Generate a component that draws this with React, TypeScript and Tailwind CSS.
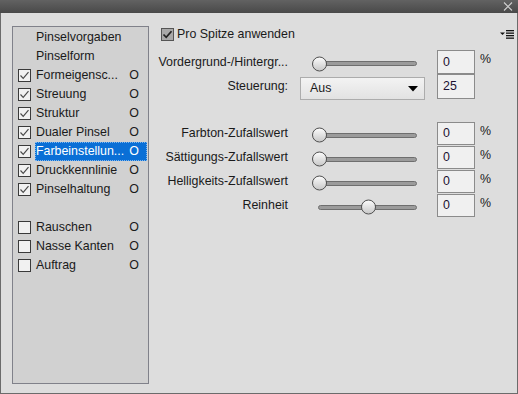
import React from "react";

const Check = ({ checked, dark }: { checked: boolean; dark?: boolean }) => (
  <div
    className={
      dark
        ? "w-[13px] h-[13px] border border-[#555555] bg-[#a9a9a9] flex items-center justify-center"
        : "w-[13px] h-[13px] border border-[#3a3a3a] bg-[#f1f1f1] flex items-center justify-center"
    }
  >
    {checked && (
      <svg width="11" height="11" viewBox="0 0 11 11">
        <polyline
          points="1.5,5.5 4.2,8.3 9.5,2.2"
          fill="none"
          stroke={dark ? "#222222" : "#4a4a4a"}
          strokeWidth={dark ? 1.7 : 1.2}
        />
      </svg>
    )}
  </div>
);

type Item = { label: string; cb: boolean | null; checked?: boolean; o?: boolean; sel?: boolean };

const items: (Item | null)[] = [
  { label: "Pinselvorgaben", cb: null },
  { label: "Pinselform", cb: null },
  { label: "Formeigensc...", cb: true, checked: true, o: true },
  { label: "Streuung", cb: true, checked: true, o: true },
  { label: "Struktur", cb: true, checked: true, o: true },
  { label: "Dualer Pinsel", cb: true, checked: true, o: true },
  { label: "Farbeinstellun...", cb: true, checked: true, o: true, sel: true },
  { label: "Druckkennlinie", cb: true, checked: true, o: true },
  { label: "Pinselhaltung", cb: true, checked: true, o: true },
  null,
  { label: "Rauschen", cb: true, checked: false, o: true },
  { label: "Nasse Kanten", cb: true, checked: false, o: true },
  { label: "Auftrag", cb: true, checked: false, o: true },
];

const Slider = ({ mid }: { mid?: boolean }) => (
  <div className="ml-[12px] w-[125px] h-full flex items-center pl-[18px]">
    <div className="relative mt-[3px] w-[99px] h-[5px] rounded-full bg-[#9b9b9b] border border-[#6e6e6e]">
      <div
        className={
          (mid ? "left-[42px]" : "left-[-7px]") +
          " absolute top-1/2 -translate-y-1/2 w-[15px] h-[15px] rounded-full border border-[#4f4f4f] bg-gradient-to-b from-[#fbfbfb] to-[#c9c9c9]"
        }
      />
    </div>
  </div>
);

const Input = ({ v, h }: { v: string; h: string }) => (
  <div className={"ml-[12px] w-[38px] border border-[#8b8b8b] bg-[#f0f0f0] flex items-center pl-[5px] text-[#1c1030] " + h}>
    {v}
  </div>
);

const Pct = () => <div className="ml-[5px] self-start pt-[3px]">%</div>;

export default function App() {
  return (
    <div
      className="w-[518px] h-[394px] flex flex-col bg-[#dddddd] text-[12.4px] leading-none text-[#1a1a1a]"
      style={{ fontFamily: '"Liberation Sans", Arial, sans-serif' }}
    >
      <div className="h-[13px] shrink-0 bg-gradient-to-b from-[#626262] to-[#494949] flex items-center justify-end pr-[5px]">
        <svg width="10" height="9" viewBox="0 0 10 9">
          <path d="M1 0.5 L9 8.5 M9 0.5 L1 8.5" stroke="#d0d0d0" strokeWidth="1.1" />
        </svg>
      </div>
      <div className="flex-1 flex border-x border-b border-[#6b6b6b]">
        <div className="ml-[11px] mt-[13px] w-[137px] h-[358px] shrink-0 border border-[#80818a] bg-[#d1d1d1] pt-[1px]">
          {items.map((it, i) =>
            it === null ? (
              <div key={i} className="h-[19px]" />
            ) : (
              <div key={i} className="h-[19px] flex items-center">
                <div className="w-[22px] pl-[5px] shrink-0">{it.cb && <Check checked={!!it.checked} />}</div>
                <div
                  className={
                    "flex-1 mr-[1px] h-[19px] flex items-center justify-between pl-[1px] pr-[8px] " +
                    (it.sel ? "bg-[#0a6fd6] text-white outline-1 outline-dotted outline-[#7fb6ee] -outline-offset-1" : "")
                  }
                >
                  <span>{it.label}</span>
                  {it.o && <span>O</span>}
                </div>
              </div>
            )
          )}
        </div>
        <div className="flex-1 ml-[8px] pt-[13px] flex flex-col">
          <div className="h-[16px] flex items-center justify-between pr-[3px]">
            <div className="flex items-center ml-[4px]">
              <Check checked dark />
              <span className="ml-[3px]">Pro Spitze anwenden</span>
            </div>
            <svg width="14" height="9" viewBox="0 0 14 9">
              <polygon points="0,2.5 5,2.5 2.5,5" fill="#111" />
              <rect x="6" y="0" width="8" height="1.3" fill="#111" />
              <rect x="6" y="2.5" width="8" height="1.3" fill="#111" />
              <rect x="6" y="5" width="8" height="1.3" fill="#111" />
              <rect x="6" y="7.5" width="8" height="1.3" fill="#111" />
            </svg>
          </div>
          <div className="mt-[8px] h-[24px] flex items-center">
            <div className="w-[131px] text-right whitespace-nowrap">Vordergrund-/Hintergr...</div>
            <Slider />
            <Input v="0" h="h-[24px]" />
            <Pct />
          </div>
          <div className="h-[25px] flex items-center">
            <div className="w-[131px] text-right">Steuerung:</div>
            <div className="ml-[12px] w-[125px] h-[23px] self-start mt-[3px] border border-[#acacac] bg-gradient-to-b from-[#f3f3f3] to-[#e2e2e2] flex items-center justify-between pl-[9px] pr-[6px]">
              <span>Aus</span>
              <svg width="10" height="6" viewBox="0 0 10 6">
                <polygon points="0,0 10,0 5,5.5" fill="#000" />
              </svg>
            </div>
            <Input v="25" h="h-[25px]" />
          </div>
          <div className="mt-[23px] flex flex-col gap-[1px]">
            {[
              ["Farbton-Zufallswert", false],
              ["Sättigungs-Zufallswert", false],
              ["Helligkeits-Zufallswert", false],
              ["Reinheit", true],
            ].map(([l, mid]) => (
              <div key={l as string} className="h-[23px] flex items-center">
                <div className="w-[131px] text-right whitespace-nowrap">{l as string}</div>
                <Slider mid={mid as boolean} />
                <Input v="0" h="h-[23px]" />
                <Pct />
              </div>
            ))}
          </div>
        </div>
      </div>
    </div>
  );
}
